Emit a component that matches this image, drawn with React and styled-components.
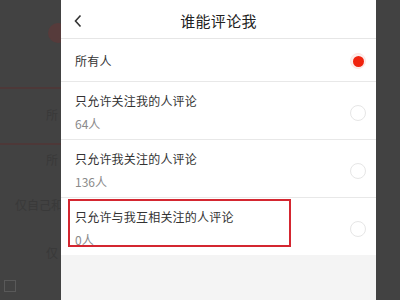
import React from "react"
import styled, { createGlobalStyle } from "styled-components"

const Global = createGlobalStyle`
	html, body {
		margin: 0;
		padding: 0;
		background: #424242;
	}
	body {
		font-family: "Noto Sans CJK SC", "Noto Sans", "Liberation Sans", sans-serif;
	}
`

const Screen = styled.div`
	position: relative;
	width: 400px;
	height: 300px;
	overflow: hidden;
	background: #424242;
`

// the page behind the sheet, dimmed; only its left edge shows
const BackPage = styled.div`
	display: flex;
	flex-direction: column;
	width: 61px;
	height: 300px;
	overflow: hidden;
`

const BackAvatar = styled.div`
	flex: none;
	width: 20px;
	height: 20px;
	border-radius: 50%;
	background: #563b3b;
	margin: 23px 0 0 48px;
`

const BackRule = styled.div`
	flex: none;
	height: 2px;
	background: #4d3838;
	margin-top: ${(p) => p.top}px;
`

const BackText = styled.div`
	flex: none;
	height: 14px;
	font-size: 12px;
	line-height: 14px;
	color: #393939;
	padding-left: ${(p) => p.left}px;
	margin-top: ${(p) => p.top}px;
	white-space: nowrap;
	overflow: hidden;
`

const BackBox = styled.div`
	flex: none;
	width: 10px;
	height: 10px;
	border: 1px solid #595959;
	margin: 20px 0 0 4px;
`

const Sheet = styled.div`
	position: absolute;
	top: 0;
	left: 61px;
	width: 315px;
	height: 300px;
	background: #f4f4f4;
	display: flex;
	flex-direction: column;
`

const Header = styled.div`
	position: relative;
	height: 39px;
	padding-top: 3px;
	box-sizing: border-box;
	border-bottom: 1px solid #e6e6e6;
	background: #fff;
	display: flex;
	align-items: center;
	justify-content: center;
`

const Back = styled.div`
	position: absolute;
	left: 12px;
	top: 14px;
	display: flex;
`

const Title = styled.div`
	font-size: 15px;
	color: #222;
	letter-spacing: 0.3px;
`

const List = styled.div`
	background: #fff;
	display: flex;
	flex-direction: column;
`

const Row = styled.div`
	position: relative;
	display: flex;
	align-items: center;
	justify-content: space-between;
	padding: ${(p) => (p.single ? "13px" : "10px")} 10px ${(p) => (p.single ? "11px" : "6px")} 14px;
	border-bottom: ${(p) => (p.last ? "none" : "1px solid #e8e8e8")};
`

const Texts = styled.div`
	display: flex;
	flex-direction: column;
	gap: 5px;
`

const Label = styled.div`
	font-size: 12px;
	line-height: 18px;
	color: #333;
	letter-spacing: 0.2px;
`

const Count = styled.div`
	font-size: 12px;
	line-height: 18px;
	color: #8a8a8a;
`

const Radio = styled.div`
	width: 16px;
	height: 16px;
	border-radius: 50%;
	box-sizing: border-box;
	border: 1.5px solid ${(p) => (p.on ? "#fde6e3" : "#e6e6e6")};
	background: ${(p) => (p.on ? "#fdeeec" : "#fff")};
	display: flex;
	align-items: center;
	justify-content: center;
	&::after {
		content: "";
		display: ${(p) => (p.on ? "block" : "none")};
		width: 11px;
		height: 11px;
		border-radius: 50%;
		background: #f0230e;
	}
`

const Highlight = styled.div`
	position: absolute;
	left: 7px;
	top: 1px;
	width: 223px;
	height: 48px;
	box-sizing: border-box;
	border: 2px solid #d42630;
	pointer-events: none;
`

const options = [
	{ label: "只允许关注我的人评论", count: "64人" },
	{ label: "只允许我关注的人评论", count: "136人" },
	{ label: "只允许与我互相关注的人评论", count: "0人", marked: true },
]

export default function App() {
	return (
		<Screen>
			<Global />
			<BackPage>
				<BackAvatar />
				<BackRule top={44} />
				<BackText left={46} top={19}>所</BackText>
				<BackRule top={21} />
				<BackText left={46} top={8}>所</BackText>
				<BackText left={15} top={31}>仅自己和</BackText>
				<BackText left={46} top={34}>仅</BackText>
				<BackBox />
			</BackPage>
			<Sheet>
				<Header>
					<Back>
						<svg width="10" height="14" viewBox="0 0 10 14">
							<polyline points="7.5,1.5 2.5,7 7.5,12.5" fill="none" stroke="#333" strokeWidth="1.6" />
						</svg>
					</Back>
					<Title>谁能评论我</Title>
				</Header>
				<List>
					<Row single>
						<Label>所有人</Label>
						<Radio on />
					</Row>
					{options.map((o, i) => (
						<Row key={o.label} last={i === options.length - 1}>
							<Texts>
								<Label>{o.label}</Label>
								<Count>{o.count}</Count>
							</Texts>
							<Radio />
							{o.marked && <Highlight />}
						</Row>
					))}
				</List>
			</Sheet>
		</Screen>
	)
}
